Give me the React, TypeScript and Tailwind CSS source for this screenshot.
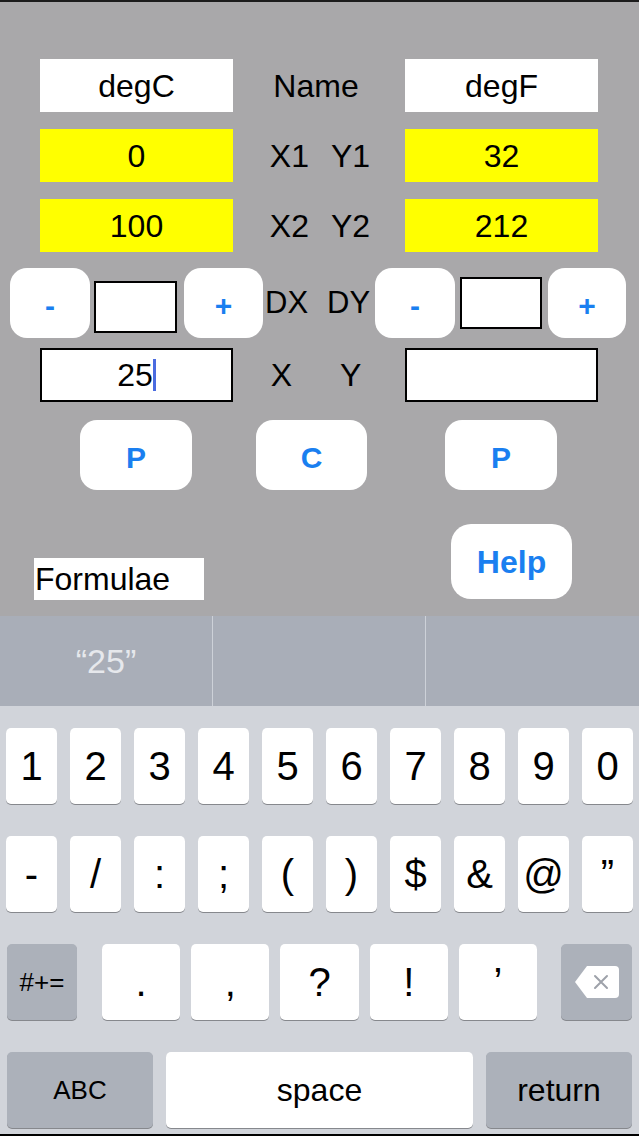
import type { ReactNode } from 'react';

const rows = [
  { left: 'degC', right: 'degF', mid: ['Name'], yellow: false },
  { left: '0', right: '32', mid: ['X1', 'Y1'], yellow: true },
  { left: '100', right: '212', mid: ['X2', 'Y2'], yellow: true },
];

const digits = ['1', '2', '3', '4', '5', '6', '7', '8', '9', '0'];
const symbols = ['-', '/', ':', ';', '(', ')', '$', '&', '@', '\u201D'];
const punct = ['.', ',', '?', '!', '\u2019'];

function Btn({ children, className = '' }: { children: ReactNode; className?: string }) {
  return (
    <div
      className={`flex h-[70px] items-center justify-center rounded-[17px] bg-white pt-[4px] text-[30px] font-bold text-[#1a7ff0] ${className}`}
    >
      {children}
    </div>
  );
}

function Key({ children, className = '', dark = false }: { children?: ReactNode; className?: string; dark?: boolean }) {
  return (
    <div
      className={`flex h-[76px] items-center justify-center rounded-[5px] shadow-[0_1px_0_#86888d] ${
        dark ? 'bg-[#acb1ba]' : 'bg-white'
      } ${className}`}
    >
      {children}
    </div>
  );
}

function DeleteIcon() {
  return (
    <svg width="44" height="32" viewBox="0 0 44 32">
      <path d="M12 0 H40 a4 4 0 0 1 4 4 V28 a4 4 0 0 1 -4 4 H12 L0 16 Z" fill="#ffffff" />
      <path d="M20 10 L32 22 M32 10 L20 22" stroke="#9ea2aa" strokeWidth="2" strokeLinecap="round" />
    </svg>
  );
}

export default function App() {
  return (
    <div className="h-[1136px] w-[639px] overflow-hidden font-['Liberation_Sans',Arial,sans-serif] text-black">
      {/* app area */}
      <div className="flex h-[616px] flex-col border-t-2 border-[#1c1c1c] bg-[#a9a8aa] text-[32px]">
        <div className="mt-[57px] flex flex-col gap-[17px]">
          {rows.map((r) => (
            <div key={r.left} className="flex h-[53px] items-center pl-[40px]">
              <div
                className={`flex h-full w-[193px] items-center justify-center ${r.yellow ? 'bg-[#ffff00]' : 'bg-white'}`}
              >
                {r.left}
              </div>
              <div className={`flex w-[172px] justify-center gap-[22px] ${r.yellow ? 'pl-[2px]' : 'pr-[6px]'}`}>
                {r.mid.map((m) => (
                  <span key={m}>{m}</span>
                ))}
              </div>
              <div
                className={`flex h-full w-[193px] items-center justify-center ${r.yellow ? 'bg-[#ffff00]' : 'bg-white'}`}
              >
                {r.right}
              </div>
            </div>
          ))}
        </div>

        {/* DX / DY steppers */}
        <div className="mt-[16px] flex h-[70px] items-center pl-[10px]">
          <Btn className="w-[80px]">-</Btn>
          <div className="ml-[4px] mt-[13px] h-[52px] w-[83px] self-start border-2 border-black bg-white" />
          <Btn className="ml-[7px] w-[79px]">+</Btn>
          <div className="flex w-[112px] items-center gap-[19px] pl-[2px] text-[31px]">
            <span>DX</span>
            <span>DY</span>
          </div>
          <Btn className="w-[80px]">-</Btn>
          <div className="ml-[5px] mt-[9px] h-[52px] w-[82px] self-start border-2 border-black bg-white" />
          <Btn className="ml-[6px] w-[78px]">+</Btn>
        </div>

        {/* X / Y inputs */}
        <div className="mt-[10px] flex h-[54px] items-center pl-[40px]">
          <div className="flex h-full w-[193px] items-center justify-center border-2 border-black bg-white">
            <span>25</span>
            <span className="h-[32px] w-[3px] bg-[#4a6be0]" />
          </div>
          <div className="flex w-[172px] justify-center gap-[48px] pr-[6px]">
            <span>X</span>
            <span>Y</span>
          </div>
          <div className="h-full w-[193px] border-2 border-black bg-white" />
        </div>

        {/* P C P */}
        <div className="mt-[18px] flex pl-[80px]">
          <Btn className="w-[112px]">P</Btn>
          <Btn className="ml-[64px] w-[111px]">C</Btn>
          <Btn className="ml-[78px] w-[112px]">P</Btn>
        </div>

        <div className="mt-[34px] flex items-end pl-[34px]">
          <div className="flex h-[42px] w-[170px] items-center bg-white pl-[1px]">Formulae</div>
          <div className="mb-[1px] ml-[247px] flex h-[75px] w-[121px] items-center justify-center rounded-[20px] bg-white text-[32px] font-bold text-[#1a7ff0]">
            Help
          </div>
        </div>
      </div>

      {/* keyboard */}
      <div className="flex h-[520px] flex-col border-b-2 border-black bg-[#d1d4da] text-[40px]">
        <div className="grid h-[90px] grid-cols-3 divide-x divide-[#cdd1d8] bg-[#a9aeb8]">
          <div className="flex items-center justify-center text-[34px] text-[#e6e8ec]">{'\u201C25\u201D'}</div>
          <div />
          <div />
        </div>

        <div className="mt-[22px] flex gap-[13px] px-[6px]">
          {digits.map((d) => (
            <Key key={d} className="flex-1">
              {d}
            </Key>
          ))}
        </div>

        <div className="mt-[32px] flex gap-[13px] px-[6px]">
          {symbols.map((s) => (
            <Key key={s} className="flex-1">
              {s}
            </Key>
          ))}
        </div>

        <div className="mt-[32px] flex px-[7px]">
          <Key dark className="w-[70px] text-[26px]">
            #+=
          </Key>
          <div className="ml-[25px] flex w-[435px] gap-[11px]">
            {punct.map((p) => (
              <Key key={p} className="flex-1">
                {p}
              </Key>
            ))}
          </div>
          <Key dark className="ml-[24px] w-[71px]">
            <DeleteIcon />
          </Key>
        </div>

        <div className="mt-[32px] flex gap-[13px] px-[7px]">
          <Key dark className="w-[146px] text-[26px]">
            ABC
          </Key>
          <Key className="flex-1 text-[32px]">space</Key>
          <Key dark className="w-[146px] text-[32px]">
            return
          </Key>
        </div>
      </div>
    </div>
  );
}
